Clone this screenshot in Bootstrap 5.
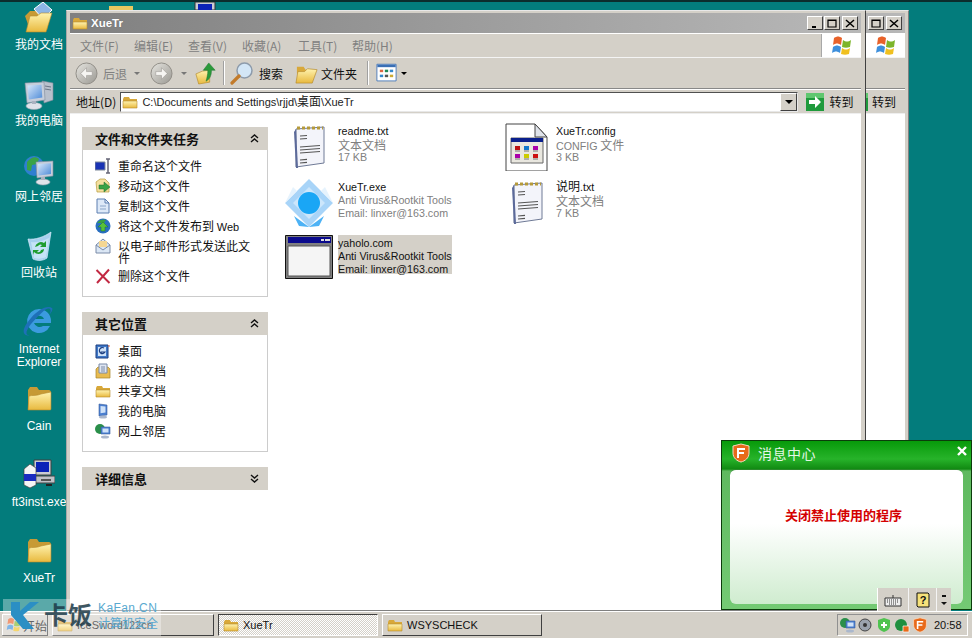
<!DOCTYPE html>
<html lang="zh-CN">
<head>
<meta charset="UTF-8">
<title>XueTr</title>
<link href="https://cdn.jsdelivr.net/npm/bootstrap@5.3.0/dist/css/bootstrap.min.css" rel="stylesheet">
<style>
html, body { height: 638px; overflow: hidden; }
body { width: 972px; background: #037c7c; font-family: "Noto Sans CJK SC", "Noto Sans", sans-serif; font-size: 12px; line-height: 13px; color: #111; }
.screen { position: relative; height: 638px; overflow: hidden; }
.desk { position: relative; flex: 1 1 auto; min-height: 0; border-top: 2px solid #0c2c2c; overflow: hidden; }
.lt { font-family: "Liberation Sans", sans-serif; font-size: 11px; }

/* desktop icons */
.dicon { position: absolute; left: 0; width: 78px; text-align: center; color: #fff; font-size: 12px; line-height: 13px; }
.dicon svg { display: block; margin: 0 auto 3px; width: 32px; height: 32px; }
.dicon.lt svg { margin-bottom: 6px; }
.peek { position: absolute; top: 0; line-height: 0; }

/* windows */
.xwin { position: absolute; top: 8px; height: 601px; background: #d4d0c8; border: 1px solid #808080; border-left-color: #a8a8a8; border-top-color: #e8e8e8; border-right: 1px solid #404040; padding: 2px 3px 0; }
.back { left: 500px; width: 409px; border-right-color: #808080; }
.front { left: 66px; width: 800px; padding-right: 4px; }
.tbar { height: 20px; background: linear-gradient(90deg, #808080, #b8b8b8); color: #fff; padding: 0 3px 0 2px; flex: none; }
.tbar b { font-family: "Liberation Sans", sans-serif; font-size: 11.5px; margin-left: 3px; text-shadow: 0 0 1px #666; }
.wbtn { width: 16px; height: 14px; background: #d4d0c8; border: 1px solid; border-color: #fff #404040 #404040 #fff; display: flex; align-items: center; justify-content: center; margin-left: 1px; }
.wbtn svg { width: 10px; height: 9px; }
.wgap { margin-left: 2px; }
.mbar { height: 25px; border-top: 1px solid #fff; border-bottom: 1px solid #f4f4f4; flex: none; color: #808080; padding-left: 10px; }
.mbar span { width: 54px; }
.flag { width: 40px; height: 23px; background: #fff; border-left: 1px solid #a8a8a8; flex: none; }
.flag svg { width: 22px; height: 20px; }
.tools { height: 31px; border-bottom: 1px solid #888; flex: none; padding-left: 5px; }
.tools .gray { color: #808080; }
.vsep { width: 2px; height: 24px; border-left: 1px solid #a0a0a0; border-right: 1px solid #fff; }
.caret { width: 0; height: 0; border: 3px solid transparent; border-top: 3px solid #777; border-bottom: 0; }
.addr { height: 24px; flex: none; padding: 0 0 0 6px; border-top: 1px solid #fff; }
.addr-box { width: 678px; height: 20px; margin-left: 4px; background: #fff; border: 1px solid; border-color: #505050 #e8e8e8 #e8e8e8 #505050; padding-left: 1px; position: relative; }
.addr-box .path { margin-left: 4px; color: #222; }
.dd { position: absolute; right: 0; top: 0; width: 17px; height: 18px; background: #d4d0c8; border: 1px solid; border-color: #fff #404040 #404040 #fff; display: flex; align-items: center; justify-content: center; }
.dd i { width: 0; height: 0; border: 4px solid transparent; border-top: 4px solid #000; border-bottom: 0; }
.win-body { flex: 1 1 auto; background: #fff; border-top: 1px solid #eee; min-height: 0; }
.side { width: 198px; padding: 13px 0 0 12px; flex: none; }

.task { width: 186px; margin-bottom: 15px; border: 0; border-radius: 0; background: transparent; }
.task .card-header { height: 23px; padding: 0 9px 0 13px; background: #d4d0c8; border: 0; border-radius: 0; font-weight: 700; font-size: 13px; }
.task .card-header svg { width: 9px; height: 9px; }
.card.task > .list-group:last-child { border: 1px solid #ccc; border-top: 0; border-radius: 0; padding: 6px 17px 10px 12px; }
.task .list-group-item { border: 0; background: transparent; padding: 0; min-height: 20px; display: flex; gap: 7px; align-items: flex-start; padding-top: 4px; line-height: 12px; font-size: 12px; color: #111; }
.task .list-group-item.two-line { min-height: 30px; }
.task .list-group-item svg { width: 16px; height: 16px; flex: none; margin-top: -2px; }

.files { display: grid; grid-template-columns: 218px 218px; grid-auto-rows: 56px; padding: 9px 0 0 17px; }
.ftile { display: flex; gap: 5px; }
.ficon { width: 48px; height: 48px; flex: none; display: flex; justify-content: center; align-items: flex-start; }
.ficon svg { width: 48px; height: 48px; }
.ftext { font-size: 12px; line-height: 13px; white-space: nowrap; }
.ftext .lt { font-size: 10.7px; }
.ftext em { display: block; font-style: normal; color: #808080; height: 13px; }
.ftile.sel .ftext { background: #d4d0c8; height: 39px; }
.ftile.sel .ftext em { color: #111; }

/* taskbar */
.tskbar { height: 27px; flex: none; background: #d4d0c8; border-top: 1px solid #fff; padding: 2px 4px 2px 2px; gap: 4px; }
.tskbtn { height: 22px; width: 160px; padding: 0 4px; background: #d4d0c8; border: 1px solid; border-color: #fff #404040 #404040 #fff; gap: 4px; white-space: nowrap; }
.tskbtn svg { width: 16px; height: 16px; flex: none; }
.tskbtn.st { width: 46px; gap: 1px; padding: 0 2px 0 3px; }
.tskbtn.on { border-color: #404040 #fff #fff #404040; background-color: #ecebe6; background-image: repeating-conic-gradient(#d4d0c8 0 25%, #fff 0 50%); background-size: 2px 2px; }
.tray { height: 22px; width: 131px; margin-left: auto; border: 1px solid; border-color: #909090 #fff #fff #909090; padding: 0 5px 0 2px; gap: 2px; }
.tray svg { width: 16px; height: 16px; flex: none; }

/* message popup */
.popup { position: absolute; left: 721px; top: 438px; width: 251px; height: 170px; border: 1px solid #0b3d0b; background: linear-gradient(#079a0a 0, #27b32a 18px, #118a12 28px, #5fb95f 30px, #74ca74 100%); padding: 0 8px 5px 8px; }
.pop-head { height: 28px; color: #fff; font-size: 14px; padding-bottom: 4px; }
.pop-head svg { width: 20px; height: 20px; margin: 0 7px 0 1px; }
.pop-head span { color: #e6f7e6; letter-spacing: .5px; }
.pop-x { position: absolute; right: 3px; top: 3px; width: 12px; height: 14px; }
.pop-in { height: 135px; border-radius: 6px; border-top: 1px solid #2b8a2b; background: linear-gradient(#fff 0, #fff 40%, #cfeccf 100%); color: #d40000; font-weight: 700; font-size: 13px; padding: 38px 6px 0 0; text-align: center; }
.pop-tools { position: absolute; left: 155px; bottom: -2px; width: 74px; height: 23px; background: #d4d0c8; border-left: 1px solid #fff; }
.pop-tools div { height: 23px; border-right: 1px solid #f4f4f4; display: flex; align-items: center; justify-content: center; }
.pop-tools svg { width: 18px; height: 16px; }

/* watermark */
.wmark { position: absolute; left: 3px; top: 599px; width: 158px; height: 37px; background: rgba(255,255,255,.35); overflow: hidden; }
.wm-k { position: absolute; left: 7px; top: 1px; width: 30px; height: 31px; }
.wm-cn { position: absolute; left: 41px; top: 1px; font-size: 24px; line-height: 27px; font-weight: 700; color: #1c3a48; opacity: .85; }
.wm-en { position: absolute; left: 95px; top: 2px; font-family: "Liberation Sans", sans-serif; font-size: 12px; color: #5aa9d0; line-height: 14px; letter-spacing: .4px; }
.wm-zh { position: absolute; left: 95px; top: 17px; font-size: 12px; color: #5aa9d0; line-height: 14px; }
</style>
</head>
<body>
<svg width="0" height="0" class="position-absolute">
  <defs>
    <linearGradient id="gf" x1="0" y1="0" x2="0" y2="1"><stop offset="0" stop-color="#fff3b0"/><stop offset="1" stop-color="#e8b93e"/></linearGradient>
    <linearGradient id="gs" x1="0" y1="0" x2="1" y2="1"><stop offset="0" stop-color="#d8e8fa"/><stop offset="1" stop-color="#4e8bd8"/></linearGradient>
    <linearGradient id="gb" x1="0" y1="0" x2="1" y2="1"><stop offset="0" stop-color="#e6e5e0"/><stop offset="1" stop-color="#9a9892"/></linearGradient>
    <symbol id="i-folder" viewBox="0 0 32 32"><path d="M5 8l2-3h7l2 3h10c1 0 2 1 2 2v16c0 1-1 2-2 2H7c-1 0-2-1-2-2z" fill="#c79a35"/><path d="M5 28l1-14c3-1 8 0 12-2l10-2v17c0 1-1 1-2 1z" fill="url(#gf)" stroke="#b58a2c" stroke-width=".6"/></symbol>
    <symbol id="i-docs" viewBox="0 0 32 32"><path d="M2 14l5-5h8l1 3h11l-3 16H7z" fill="#c79a35"/><path d="M11 7l9-7 9 8-9 9z" fill="#8eb6e6" stroke="#fff"/><path d="M3 30l4-16h7l4-3h11l-6 19z" fill="url(#gf)" stroke="#b58a2c" stroke-width=".6"/></symbol>
    <symbol id="i-pc" viewBox="0 0 32 32"><path d="M19 3l11 2v17l-9 3z" fill="#b9c0cc" stroke="#7f8a9a" stroke-width=".6"/><path d="M22 8l6 1M22 11l6 1" stroke="#6b7687"/><path d="M2 5l19-1 1 18-18 3z" fill="#c6cedb" stroke="#7f8a9a" stroke-width=".6"/><path d="M4.500 7.500l14-.8.8 12.800-13.500 2z" fill="url(#gs)"/><ellipse cx="11" cy="28" rx="8" ry="3.500" fill="#dfe3ea" stroke="#9aa3b0" stroke-width=".6"/><path d="M9 23h4v3H9z" fill="#aab2c0"/></symbol>
    <symbol id="i-net" viewBox="0 0 32 32"><circle cx="11" cy="12" r="10" fill="#2f7fd0"/><path d="M4 8c4-5 9-6 12-3l-2 5-5 1-1 6-4-1z" fill="#3aa346"/><path d="M13 8l17-1v15l-16 2z" fill="#c6cedb" stroke="#7f8a9a" stroke-width=".6"/><path d="M15 10l13-.8v10.800l-12.500 1.500z" fill="url(#gs)"/><ellipse cx="20" cy="28" rx="7" ry="3" fill="#dfe3ea" stroke="#9aa3b0" stroke-width=".6"/><path d="M18 23h4v3h-4z" fill="#aab2c0"/></symbol>
    <symbol id="i-bin" viewBox="0 0 32 32"><path d="M5 9c7 1 16-2 23-7l-4 26c-4 3-10 3-14 1z" fill="#a7d0ef" stroke="#dcefff" stroke-width=".7"/><path d="M8 12c6 1 12-1 18-4l-3 19c-4 2-8 2-12 1z" fill="#c5e3f7"/><path d="M21 13a6 6 0 0 0-9 4l3-1a3 3 0 0 1 4-1l-2 2 6 0 0-6z M11 22a6 6 0 0 0 9 0 5 5 0 0 0 1-3l-3 1a3 3 0 0 1-4 2l2-2h-6v5z" fill="#1e9c30"/></symbol>
    <symbol id="i-ie" viewBox="0 0 32 32"><path d="M16 4a12 12 0 1 0 11 17h-7a6 6 0 0 1-9-3h17v-2A12 12 0 0 0 16 4zm-5 10a5.500 5.500 0 0 1 10 0z" fill="#3b9bdf"/><path d="M29 3c-5-3-14 2-21 10S-1 27 2 29.500s11-1 11-1c-5 2-8 2-9 1-2-2 2-9 9-16S24 2 27 4c1 1 1 3-1 6 3-3 4-6 3-7z" fill="#1e70b8"/></symbol>
    <symbol id="i-setup" viewBox="0 0 32 32"><path d="M11 2h17v15H11z" fill="#c9ccd2" stroke="#404040"/><path d="M13 4h13v10H13z" fill="#0a22b8"/><path d="M10 18h22v7H10z" fill="#bfc2c8" stroke="#404040"/><path d="M18 21h10v2H18z" fill="#555"/><path d="M23 26h6v2h-6z" fill="#222"/><path d="M1 11l6-5 6 4v17l-6 3-6-3z" fill="#f5f5f5" stroke="#404040" stroke-width=".7"/><path d="M1 16h12v7H1z" fill="#1a2cc0"/></symbol>
    <symbol id="i-pad" viewBox="0 0 48 48"><path d="M11 6l28-2v36l-28 4z" fill="#f3f4fa" stroke="#6f7a96"/><path d="M9 9l2 36h2l-2-39z" fill="#5c6a9a"/><path d="M12 5h26" stroke="#b59a3a" stroke-width="3" stroke-dasharray="3 2"/><path d="M15 13l7-.5M15 16l7-.5M15 24l20-1.500M15 27l20-1.500M15 30l20-1.500M15 37l7-.7M15 40l7-.7" stroke="#555" stroke-width="1.200"/></symbol>
    <symbol id="i-cfg" viewBox="0 0 48 48"><path d="M3 1h29l12 13v34H3z" fill="#fff" stroke="#444"/><path d="M32 1v13h12z" fill="#dfe3ea" stroke="#444"/><path d="M8 15h32v25H8z" fill="#e9e7df" stroke="#666"/><path d="M8 15h32v4H8z" fill="#0a1f8c"/><path d="M12 23h5v4h-5z" fill="#b11"/><path d="M21 23h5v4h-5z" fill="#17c"/><path d="M30 23h5v4h-5z" fill="#a0a"/><path d="M12 31h5v4h-5z" fill="#a0a"/><path d="M21 31h5v4h-5z" fill="#cc0"/><path d="M30 31h5v4h-5z" fill="#c11"/><path d="M12 28h5M21 28h5M30 28h5M12 36h5M21 36h5M30 36h5" stroke="#777"/></symbol>
    <symbol id="i-exe" viewBox="0 0 48 48"><path d="M24 0l24 24-24 24L0 24z" fill="#a8d4f8"/><path d="M24 8l16 16-16 16L8 24z" fill="#cce6fb"/><circle cx="24" cy="24" r="11" fill="#1aa6f5"/><path d="M0 24l12-12-4-4zM48 24L36 12l4-4z" fill="#e6f3fd"/><path d="M9 37l15 11-10-1zM39 37L24 48l10-1z" fill="#4db2f5"/></symbol>
    <symbol id="i-app" viewBox="0 0 48 48"><path d="M.5.500h47v43H.5z" fill="#808080" stroke="#111"/><path d="M3 2h43v6H3z" fill="#0a0a8c"/><path d="M36 4h3v2h-3zM40 4h3v2h-3zM43 4h2v2h-2z" fill="#ddd"/><path d="M3 11h42v30H3z" fill="#f5f5f5" stroke="#555"/></symbol>
    <symbol id="i-flag" viewBox="0 0 22 20"><path d="M3 2c3-2 5-2 8 0l-1 7c-3-2-5-2-8 0z" fill="#e8622a"/><path d="M12 4c3 2 5 2 8 0l-1 7c-3 1-5 1-8 0z" fill="#7db52a"/><path d="M2 11c3-2 5-2 8 0l-1 6c-3-2-5-2-8 0z" fill="#3d8fdc"/><path d="M11 12c3 2 5 2 8 0l-1 6c-3 1-5 1-8 0z" fill="#f0c020"/></symbol>
    <symbol id="i-back" viewBox="0 0 24 24"><circle cx="12" cy="12" r="11" fill="url(#gb)" stroke="#8f8c86"/><path d="M12 6l-6 6 6 6v-4h6v-4h-6z" fill="#f6f5f2" stroke="#8f8c86" stroke-width=".5"/></symbol>
    <symbol id="i-fwd" viewBox="0 0 24 24"><circle cx="12" cy="12" r="11" fill="url(#gb)" stroke="#8f8c86"/><path d="M12 6l6 6-6 6v-4H6v-4h6z" fill="#f6f5f2" stroke="#8f8c86" stroke-width=".5"/></symbol>
    <symbol id="i-up" viewBox="0 0 24 24"><path d="M1 13l7-3 8-1v13l-12 2z" fill="url(#gf)" stroke="#b58a2c" stroke-width=".7"/><path d="M15 1l7 8h-4c0 6-2 10-6 12 1-4 2-7 2-12H9z" fill="#2b9a3a" stroke="#16702a" stroke-width=".5"/></symbol>
    <symbol id="i-search" viewBox="0 0 24 24"><circle cx="14.500" cy="9.500" r="7.500" fill="#d3e6f6" stroke="#8d9bab" stroke-width="1.500"/><path d="M9 15l-7 7" stroke="#c27a2a" stroke-width="3.200" stroke-linecap="round"/></symbol>
    <symbol id="i-view" viewBox="0 0 24 24"><path d="M.5 1.500h23v20H.5z" fill="#fff" stroke="#3a6fb5"/><path d="M1 2h22v3H1z" fill="#3a6fb5"/><path d="M4 8h4v3H4z" fill="#d64"/><path d="M10 8h4v3h-4z" fill="#285"/><path d="M16 8h4v3h-4z" fill="#38c"/><path d="M4 14h4v3H4z" fill="#38c"/><path d="M10 14h4v3h-4z" fill="#555"/><path d="M16 14h4v3h-4z" fill="#ca3"/></symbol>
    <symbol id="i-go" viewBox="0 0 18 18"><path d="M0 0h18v18H0z" fill="#1f9a3c"/><path d="M0 0h18v5H0z" fill="#5fc76f"/><path d="M9 3l6 6-6 6v-4H3V7h6z" fill="#fff"/></symbol>
    <symbol id="t-rename" viewBox="0 0 16 16"><path d="M0 4h10v8H0z" fill="#1a33b5" stroke="#7f8a9a"/><path d="M11 1h4M13 1v14M11 15h4" stroke="#667" stroke-width="1.500"/></symbol>
    <symbol id="t-move" viewBox="0 0 16 16"><path d="M1 4l4-3h5l4 4v9H2z" fill="#f4e0a0" stroke="#b59a3a" stroke-width=".7"/><path d="M4 7l5 0V4l6 5-6 5v-3H4z" fill="#3aa346" stroke="#1d6d2a" stroke-width=".5"/></symbol>
    <symbol id="t-copy" viewBox="0 0 16 16"><path d="M2 1h8l4 4v10H2z" fill="#dde9f8" stroke="#5d7fb0"/><path d="M10 1v4h4" fill="none" stroke="#5d7fb0"/><path d="M5 8h6M5 11h6" stroke="#8aa5c8"/></symbol>
    <symbol id="t-web" viewBox="0 0 16 16"><circle cx="8" cy="8" r="7.500" fill="#2a6fc0"/><path d="M2 5c3-4 7-4 9-3l-2 3H5z" fill="#39a045"/><path d="M8 4l5 5h-3v4H6V9H3z" fill="#58c03a" stroke="#1b7a2d" stroke-width=".5"/></symbol>
    <symbol id="t-mail" viewBox="0 0 16 16"><path d="M1 7l7-6 7 6v8H1z" fill="#dbe7f5" stroke="#7a8ba8"/><path d="M4 3h8v6H4z" fill="#f4d692"/><path d="M1 7l7 5 7-5" fill="none" stroke="#7a8ba8"/></symbol>
    <symbol id="t-del" viewBox="0 0 16 16"><path d="M1.500 2l13 13M14 1.500L2 15" stroke="#c22842" stroke-width="2"/></symbol>
    <symbol id="t-desk" viewBox="0 0 16 16"><path d="M1 2h12v13H1z" fill="#3f78c8" stroke="#1d3f80"/><path d="M3 4h8v9H3z" fill="#cfe2f8"/><path d="M9 5a3 3 0 1 0 1 4H6" fill="none" stroke="#1d3f80" stroke-width="1.200"/><path d="M14 2l1 1-1 1-1-1z" fill="#d64"/></symbol>
    <symbol id="t-docs" viewBox="0 0 16 16"><path d="M1 6l2-2h10l2 2v9H1z" fill="#e8bb50" stroke="#a8842a" stroke-width=".7"/><path d="M4 1h8v9H4z" fill="#dfe6f2" stroke="#7a8ba8"/><path d="M6 4h4M6 6h4M6 8h4" stroke="#7a8ba8"/></symbol>
    <symbol id="t-fold" viewBox="0 0 16 16"><path d="M1 5l1-2h5l1 2h7v9H1z" fill="#d8a83a"/><path d="M1 14V7h14v7z" fill="url(#gf)" stroke="#b58a2c" stroke-width=".6"/></symbol>
    <symbol id="t-open" viewBox="0 0 24 24"><path d="M2 5h7l2 3h8v4H2z" fill="#d8a83a"/><path d="M1 22L3 10h7l3-3 10 1-5 14z" fill="url(#gf)" stroke="#b58a2c" stroke-width=".7"/></symbol>
    <symbol id="t-pc" viewBox="0 0 16 16"><path d="M4 1l8 1v10l-8 1z" fill="#4a7fd0" stroke="#3a5f9f" stroke-width=".6"/><path d="M5.500 3l5 .6v6l-5 .6z" fill="#cfe2f8"/><ellipse cx="8" cy="14" rx="4" ry="1.600" fill="#aab7cc"/></symbol>
    <symbol id="t-net" viewBox="0 0 16 16"><circle cx="5" cy="6" r="5" fill="#2a8f4a"/><path d="M6 4h9v7H6z" fill="#4a7fd0" stroke="#3a5f9f" stroke-width=".6"/><path d="M7.500 5.500h6v4h-6z" fill="#cfe2f8"/><ellipse cx="10" cy="14" rx="4" ry="1.500" fill="#aab7cc"/></symbol>
    <symbol id="i-ft" viewBox="0 0 20 20"><path d="M10 1l8 2v7c0 5-4 8-8 9-4-1-8-4-8-9V3z" fill="#e86a1a" stroke="#f7d9c0"/><path d="M6 5h8v2H8v2h5v2H8v4H6z" fill="#fff"/></symbol>
  </defs>
</svg>

<div class="screen d-flex flex-column">
  <div class="desk">
    <div class="peek" style="left:109px"><svg width="24" height="8" viewBox="0 0 24 8"><rect y="4" width="24" height="4" fill="#e8c860"/></svg></div>
    <div class="peek" style="left:194px"><svg width="22" height="8" viewBox="0 0 22 8"><rect x="1" width="20" height="8" fill="#c9ccd2" stroke="#333"/><rect x="4" y="2" width="14" height="6" fill="#0a22b8"/></svg></div>

    <div class="dicon" style="top:0"><svg><use href="#i-docs"/></svg>我的文档</div>
    <div class="dicon" style="top:76px"><svg><use href="#i-pc"/></svg>我的电脑</div>
    <div class="dicon" style="top:152px"><svg><use href="#i-net"/></svg>网上邻居</div>
    <div class="dicon" style="top:228px"><svg><use href="#i-bin"/></svg>回收站</div>
    <div class="dicon lt" style="top:303px"><svg><use href="#i-ie"/></svg>Internet<br>Explorer</div>
    <div class="dicon lt" style="top:380px"><svg><use href="#i-folder"/></svg>Cain</div>
    <div class="dicon lt" style="top:456px"><svg><use href="#i-setup"/></svg>ft3inst.exe</div>
    <div class="dicon lt" style="top:532px"><svg><use href="#i-folder"/></svg>XueTr</div>

    <div class="xwin back d-flex flex-column">
      <div class="tbar d-flex align-items-center justify-content-end"><span class="wbtn wgap"><svg viewBox="0 0 10 9"><path d="M1 1h8v7H1z M1 1.500h8" fill="none" stroke="#000" stroke-width="1.200"/></svg></span><span class="wbtn wgap"><svg viewBox="0 0 10 9"><path d="M1 1l8 7M9 1L1 8" stroke="#000" stroke-width="1.500"/></svg></span></div>
      <div class="mbar d-flex justify-content-end p-0"><div class="flag d-flex align-items-center justify-content-center"><svg><use href="#i-flag"/></svg></div></div>
      <div class="tools"></div>
      <div class="addr d-flex align-items-center justify-content-end"><svg width="18" height="18"><use href="#i-go"/></svg><span style="margin:0 9px 0 4px">转到</span></div>
      <div class="win-body"></div>
    </div>

    <div class="xwin front d-flex flex-column">
      <div class="tbar d-flex align-items-center">
        <svg width="16" height="16"><use href="#t-fold"/></svg><b>XueTr</b>
        <span class="wbtn ms-auto"><svg viewBox="0 0 10 9"><path d="M2 8h4" stroke="#000" stroke-width="2"/></svg></span>
        <span class="wbtn"><svg viewBox="0 0 10 9"><path d="M1 1h8v7H1z M1 1.500h8" fill="none" stroke="#000" stroke-width="1.200"/></svg></span>
        <span class="wbtn wgap"><svg viewBox="0 0 10 9"><path d="M1 1l8 7M9 1L1 8" stroke="#000" stroke-width="1.500"/></svg></span>
      </div>
      <div class="mbar d-flex align-items-center">
        <span>文件(F)</span><span>编辑(E)</span><span>查看(V)</span><span style="width:56px">收藏(A)</span><span>工具(T)</span><span>帮助(H)</span>
        <div class="flag d-flex align-items-center justify-content-center ms-auto"><svg><use href="#i-flag"/></svg></div>
      </div>
      <div class="tools d-flex align-items-center">
        <svg width="23" height="23"><use href="#i-back"/></svg><span class="gray" style="width:25px;margin-left:5px">后退</span><i class="caret" style="margin-left:6px"></i>
        <svg width="23" height="23" style="margin-left:10px"><use href="#i-fwd"/></svg><i class="caret" style="margin-left:8px"></i>
        <svg width="22" height="24" style="margin-left:8px"><use href="#i-up"/></svg><span class="vsep" style="margin-left:6px"></span>
        <svg width="24" height="24" style="margin-left:5px"><use href="#i-search"/></svg><span style="margin-left:5px">搜索</span>
        <svg width="23" height="23" style="margin-left:12px"><use href="#t-open"/></svg><span style="margin-left:3px">文件夹</span>
        <span class="vsep" style="margin-left:10px"></span>
        <svg width="23" height="20" style="margin-left:6px"><use href="#i-view"/></svg><i class="caret" style="margin-left:3px;border-top-color:#000"></i>
      </div>
      <div class="addr d-flex align-items-center">
        <span>地址(D)</span>
        <div class="addr-box d-flex align-items-center"><svg width="16" height="16"><use href="#t-fold"/></svg><span class="path"><span class="lt">C:\Documents and Settings\rjjd\</span>桌面<span class="lt">\XueTr</span></span><span class="dd"><i></i></span></div>
        <svg width="18" height="18" style="margin-left:8px"><use href="#i-go"/></svg><span style="margin-left:5px">转到</span>
      </div>
      <div class="win-body d-flex">
        <div class="side">
          <div class="card task">
            <div class="card-header d-flex align-items-center justify-content-between">文件和文件夹任务<svg viewBox="0 0 9 9"><path d="M1 4l3.500-3L8 4M1 8l3.500-3L8 8" fill="none" stroke="#111" stroke-width="1.400"/></svg></div>
            <div class="list-group">
              <div class="list-group-item"><svg><use href="#t-rename"/></svg>重命名这个文件</div>
              <div class="list-group-item"><svg><use href="#t-move"/></svg>移动这个文件</div>
              <div class="list-group-item"><svg><use href="#t-copy"/></svg>复制这个文件</div>
              <div class="list-group-item"><svg><use href="#t-web"/></svg><span>将这个文件发布到 <span class="lt">Web</span></span></div>
              <div class="list-group-item two-line"><svg><use href="#t-mail"/></svg>以电子邮件形式发送此文件</div>
              <div class="list-group-item"><svg><use href="#t-del"/></svg>删除这个文件</div>
            </div>
          </div>
          <div class="card task">
            <div class="card-header d-flex align-items-center justify-content-between">其它位置<svg viewBox="0 0 9 9"><path d="M1 4l3.500-3L8 4M1 8l3.500-3L8 8" fill="none" stroke="#111" stroke-width="1.400"/></svg></div>
            <div class="list-group">
              <div class="list-group-item"><svg><use href="#t-desk"/></svg>桌面</div>
              <div class="list-group-item"><svg><use href="#t-docs"/></svg>我的文档</div>
              <div class="list-group-item"><svg><use href="#t-fold"/></svg>共享文档</div>
              <div class="list-group-item"><svg><use href="#t-pc"/></svg>我的电脑</div>
              <div class="list-group-item"><svg><use href="#t-net"/></svg>网上邻居</div>
            </div>
          </div>
          <div class="card task">
            <div class="card-header d-flex align-items-center justify-content-between">详细信息<svg viewBox="0 0 9 9"><path d="M1 1l3.500 3L8 1M1 5l3.500 3L8 5" fill="none" stroke="#111" stroke-width="1.400"/></svg></div>
          </div>
        </div>
        <div class="files">
          <div class="ftile"><div class="ficon"><svg><use href="#i-pad"/></svg></div><div class="ftext"><span class="lt">readme.txt</span><em>文本文档</em><em class="lt">17 KB</em></div></div>
          <div class="ftile"><div class="ficon"><svg><use href="#i-cfg"/></svg></div><div class="ftext"><span class="lt">XueTr.config</span><em><span class="lt">CONFIG</span> 文件</em><em class="lt">3 KB</em></div></div>
          <div class="ftile"><div class="ficon"><svg><use href="#i-exe"/></svg></div><div class="ftext"><span class="lt">XueTr.exe</span><em class="lt">Anti Virus&amp;Rootkit Tools</em><em class="lt">Email: linxer@163.com</em></div></div>
          <div class="ftile"><div class="ficon"><svg><use href="#i-pad"/></svg></div><div class="ftext">说明<span class="lt">.txt</span><em>文本文档</em><em class="lt">7 KB</em></div></div>
          <div class="ftile sel"><div class="ficon"><svg><use href="#i-app"/></svg></div><div class="ftext"><span class="lt">yaholo.com</span><em class="lt">Anti Virus&amp;Rootkit Tools</em><em class="lt">Email: linxer@163.com</em></div></div>
        </div>
      </div>
    </div>

    <div class="popup">
      <svg class="pop-x" viewBox="0 0 12 14"><path d="M2 3l8 8M10 3l-8 8" stroke="#fff" stroke-width="2.400"/></svg>
      <div class="pop-head d-flex align-items-center"><svg><use href="#i-ft"/></svg><span>消息中心</span></div>
      <div class="pop-in">关闭禁止使用的程序</div>
      <div class="pop-tools d-flex">
        <div style="width:32px"><svg viewBox="0 0 18 16"><path d="M1 6h16v8H1z" fill="#eee" stroke="#333"/><path d="M3 8h12M3 10h12M5 12h8" stroke="#333" stroke-dasharray="1 1"/><path d="M9 6V3" stroke="#333"/></svg></div>
        <div style="width:28px"><svg viewBox="0 0 18 16"><path d="M3 1h11l1 1v13H4l-1-1z" fill="#f6e27a" stroke="#111"/><text x="9" y="12" font-size="11" font-weight="700" text-anchor="middle" font-family="Liberation Sans" fill="#111">?</text></svg></div>
        <div style="width:14px;border:0"><svg viewBox="0 0 10 16"><path d="M3 3h4v2H3z" fill="#111"/><path d="M2 10h6l-3 3z" fill="#111"/></svg></div>
      </div>
    </div>
  </div>

  <div class="tskbar d-flex align-items-center">
    <div class="tskbtn st d-flex align-items-center"><svg><use href="#i-flag"/></svg>开始</div>
    <div class="tskbtn lt d-flex align-items-center" style="width:162px"><svg><use href="#t-fold"/></svg>IceSword122cn</div>
    <div class="tskbtn lt on d-flex align-items-center"><svg><use href="#t-fold"/></svg>XueTr</div>
    <div class="tskbtn lt d-flex align-items-center"><svg><use href="#t-fold"/></svg>WSYSCHECK</div>
    <div class="tray d-flex align-items-center">
      <svg><use href="#t-net"/></svg>
      <svg viewBox="0 0 16 16"><circle cx="7" cy="8" r="6" fill="#9aa2ad" stroke="#444"/><circle cx="7" cy="8" r="2" fill="#333"/></svg>
      <svg viewBox="0 0 16 16"><path d="M8 1l6 2v6c0 3-3 5-6 6-3-1-6-3-6-6V3z" fill="#4fc34f"/><path d="M5 8h6M8 5v6" stroke="#fff" stroke-width="2"/></svg>
      <svg viewBox="0 0 16 16"><circle cx="7" cy="8" r="6" fill="#1f8f3f"/><path d="M9 9h6v6H9z" fill="#e86a1a" stroke="#fff" stroke-width=".7"/></svg>
      <svg><use href="#i-ft"/></svg>
      <span class="lt" style="margin-left:4px">20:58</span>
    </div>
  </div>

  <div class="wmark">
    <svg class="wm-k" viewBox="0 0 30 31"><path d="M1 2h9v9L20 2h9L13 15l11 14H13L1 15z" fill="#2b8fc4"/></svg>
    <span class="wm-cn">卡饭</span>
    <span class="wm-en">KaFan.CN</span>
    <span class="wm-zh">计算机安全</span>
  </div>
</div>
</body>
</html>
